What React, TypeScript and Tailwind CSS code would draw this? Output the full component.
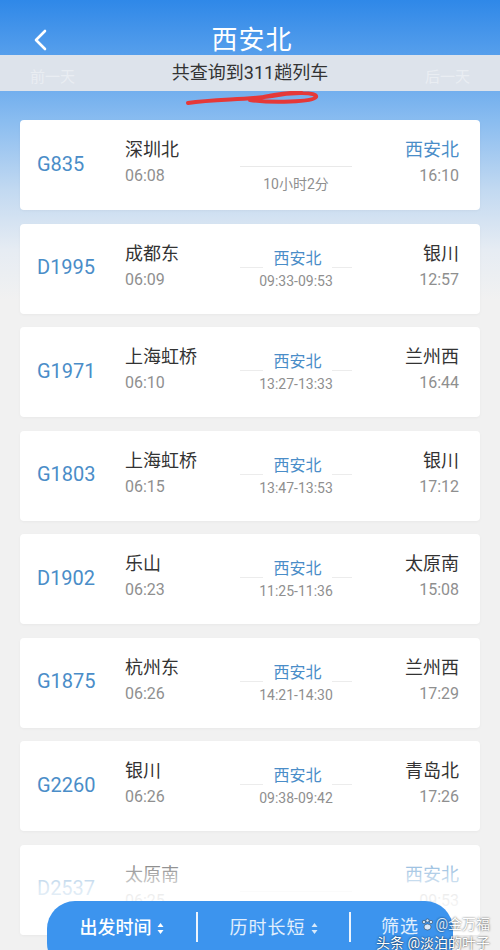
import React from "react";

type Train = {
  no: string;
  from: string;
  dep: string;
  to: string;
  arr: string;
  toBlue?: boolean;
  duration?: string;
  via?: string;
  viaTime?: string;
};

const trains: Train[] = [
  { no: "G835", from: "深圳北", dep: "06:08", to: "西安北", arr: "16:10", toBlue: true, duration: "10小时2分" },
  { no: "D1995", from: "成都东", dep: "06:09", to: "银川", arr: "12:57", via: "西安北", viaTime: "09:33-09:53" },
  { no: "G1971", from: "上海虹桥", dep: "06:10", to: "兰州西", arr: "16:44", via: "西安北", viaTime: "13:27-13:33" },
  { no: "G1803", from: "上海虹桥", dep: "06:15", to: "银川", arr: "17:12", via: "西安北", viaTime: "13:47-13:53" },
  { no: "D1902", from: "乐山", dep: "06:23", to: "太原南", arr: "15:08", via: "西安北", viaTime: "11:25-11:36" },
  { no: "G1875", from: "杭州东", dep: "06:26", to: "兰州西", arr: "17:29", via: "西安北", viaTime: "14:21-14:30" },
  { no: "G2260", from: "银川", dep: "06:26", to: "青岛北", arr: "17:26", via: "西安北", viaTime: "09:38-09:42" },
  { no: "D2537", from: "太原南", dep: "06:25", to: "西安北", arr: "09:53", toBlue: true, duration: "3小时28分" },
];

function SortArrows({ faded }: { faded?: boolean }) {
  return (
    <svg width="7" height="13" viewBox="0 0 7 13" className={faded ? "opacity-80" : ""}>
      <path d="M3.5 1 L6.5 5 L0.5 5 Z" fill="white" />
      <path d="M3.5 12 L6.5 8 L0.5 8 Z" fill="white" />
    </svg>
  );
}

function TrainCard({ t, fade }: { t: Train; fade?: boolean }) {
  return (
    <div className="relative h-[90px] shrink-0 rounded-[4px] bg-white shadow-[0_1px_3px_rgba(0,0,0,0.04)] flex pl-[17px] pr-[21px] overflow-hidden">
      <div className="w-[88px] flex items-center pb-[3px] text-[20px] leading-none text-[#4a8dc8]">
        {t.no}
      </div>
      <div className="w-[115px] pt-[17px] flex flex-col">
        <span className="text-[18px] leading-[26px] text-[#333]">{t.from}</span>
        <span className="text-[16px] leading-[26px] text-[#8f8f8f]">{t.dep}</span>
      </div>
      {t.via ? (
        <div className="w-[112px] pt-[24px] flex flex-col items-center">
          <div className="w-full flex items-end justify-between">
            <div className="w-[23px] h-px bg-[#ececec] mb-[2px]" />
            <span className="text-[16px] leading-[22px] text-[#4a8dc8]">{t.via}</span>
            <div className="w-[20px] h-px bg-[#ececec] mb-[2px]" />
          </div>
          <span className="text-[14px] leading-[22px] text-[#8f8f8f]">{t.viaTime}</span>
        </div>
      ) : (
        <div className="w-[112px] pt-[46px] flex flex-col items-center">
          <div className="w-full h-px bg-[#e9e9e9]" />
          <span className="mt-[6px] text-[14px] leading-[22px] text-[#8f8f8f]">{t.duration}</span>
        </div>
      )}
      <div className="flex-1 pt-[17px] flex flex-col items-end">
        <span className={"text-[18px] leading-[26px] " + (t.toBlue ? "text-[#4a8dc8]" : "text-[#333]")}>
          {t.to}
        </span>
        <span className="text-[16px] leading-[26px] text-[#8f8f8f]">{t.arr}</span>
      </div>
      {fade && (
        <div className="absolute inset-0 bg-[linear-gradient(180deg,rgba(255,255,255,0)_0px,rgba(255,255,255,0.5)_24px,rgba(255,255,255,0.8)_42px,rgba(255,255,255,0.9)_60px)]" />
      )}
    </div>
  );
}

export default function App() {
  return (
    <div
      className="relative w-[500px] h-[950px] overflow-hidden bg-[linear-gradient(180deg,#2f88e8_0px,#5aa1ec_60px,#89bcf0_120px,#c2d9f1_190px,#e6ecf3_250px,#f1f1f1_300px)]"
      style={{ fontFamily: 'Roboto, "Noto Sans CJK SC", sans-serif' }}
    >
      {/* header */}
      <div className="h-[55px] pt-[25px] grid grid-cols-[1fr_auto_1fr] items-center">
        <div className="pl-[33px] flex items-center">
          <svg width="14" height="22" viewBox="0 0 14 22" fill="none">
            <path d="M12 2 L3 11 L12 20" stroke="white" strokeWidth="2.6" strokeLinecap="round" strokeLinejoin="round" />
          </svg>
        </div>
        <div className="text-[26px] leading-none text-white tracking-[1px] pl-[4px]">西安北</div>
        <div />
      </div>

      {/* result count band */}
      <div className="h-[36px] bg-[#dde3eb] grid grid-cols-[1fr_auto_1fr] items-center px-[30px]">
        <span className="text-[15px] text-white/40 pt-[8px]">前一天</span>
        <span className="text-[18px] leading-none text-[#333]">共查询到311趟列车</span>
        <span className="text-[15px] text-white/40 pt-[8px] text-right">后一天</span>
      </div>

      {/* scribble */}
      <div className="h-[29px]">
        <svg width="500" height="29" viewBox="0 0 500 29" fill="none">
          <path
            d="M188 12 C 215 8, 245 9, 272 5 C 292 1, 318 1, 316 6 C 313 11, 272 12, 250 9 C 266 5, 288 1, 302 2"
            stroke="#e53838"
            strokeWidth="4"
            strokeLinecap="round"
            strokeLinejoin="round"
          />
        </svg>
      </div>

      {/* list */}
      <div className="px-[20px] flex flex-col gap-[13.5px]">
        {trains.map((t, i) => (
          <TrainCard key={t.no} t={t} fade={i === trains.length - 1} />
        ))}
      </div>

      {/* bottom filter bar */}
      <div className="absolute left-[47px] top-[901px] w-[406px] h-[70px] rounded-[28px] bg-[#3c94ee] flex items-start">
        <div className="w-[149px] h-[54px] flex items-center justify-center gap-[5px]">
          <span className="text-[18px] leading-none font-medium text-white">出发时间</span>
          <SortArrows />
        </div>
        <div className="w-[2px] h-[30px] mt-[11px] bg-white/90" />
        <div className="w-[151px] h-[54px] flex items-center justify-center gap-[5px]">
          <span className="text-[18px] leading-none text-white/85 tracking-[1px]">历时长短</span>
          <SortArrows faded />
        </div>
        <div className="w-[2px] h-[30px] mt-[11px] bg-white/90" />
        <div className="flex-1 h-[54px] flex items-center justify-center pr-[4px] pb-[2px]">
          <span className="text-[18px] leading-none text-white/85 tracking-[1px]">筛选</span>
        </div>
      </div>

      {/* watermark */}
      <div className="absolute right-[10px] bottom-0 flex flex-col items-end text-white [text-shadow:0_0_2px_rgba(0,0,0,0.9)]">
        <div className="flex items-center gap-[1px] text-[14px] leading-[18px] opacity-80 mb-[4px]">
          <svg width="13" height="13" viewBox="0 0 13 13">
            <circle cx="3" cy="4" r="1.6" fill="white" stroke="#333" strokeWidth="0.6" />
            <circle cx="6.5" cy="2.5" r="1.6" fill="white" stroke="#333" strokeWidth="0.6" />
            <circle cx="10" cy="4" r="1.6" fill="white" stroke="#333" strokeWidth="0.6" />
            <ellipse cx="6.5" cy="9" rx="3.5" ry="3" fill="white" stroke="#333" strokeWidth="0.6" />
          </svg>
          <span>@金万福</span>
        </div>
        <span className="text-[14px] leading-[13px]">头条 @淡泊的叶子</span>
      </div>
    </div>
  );
}
